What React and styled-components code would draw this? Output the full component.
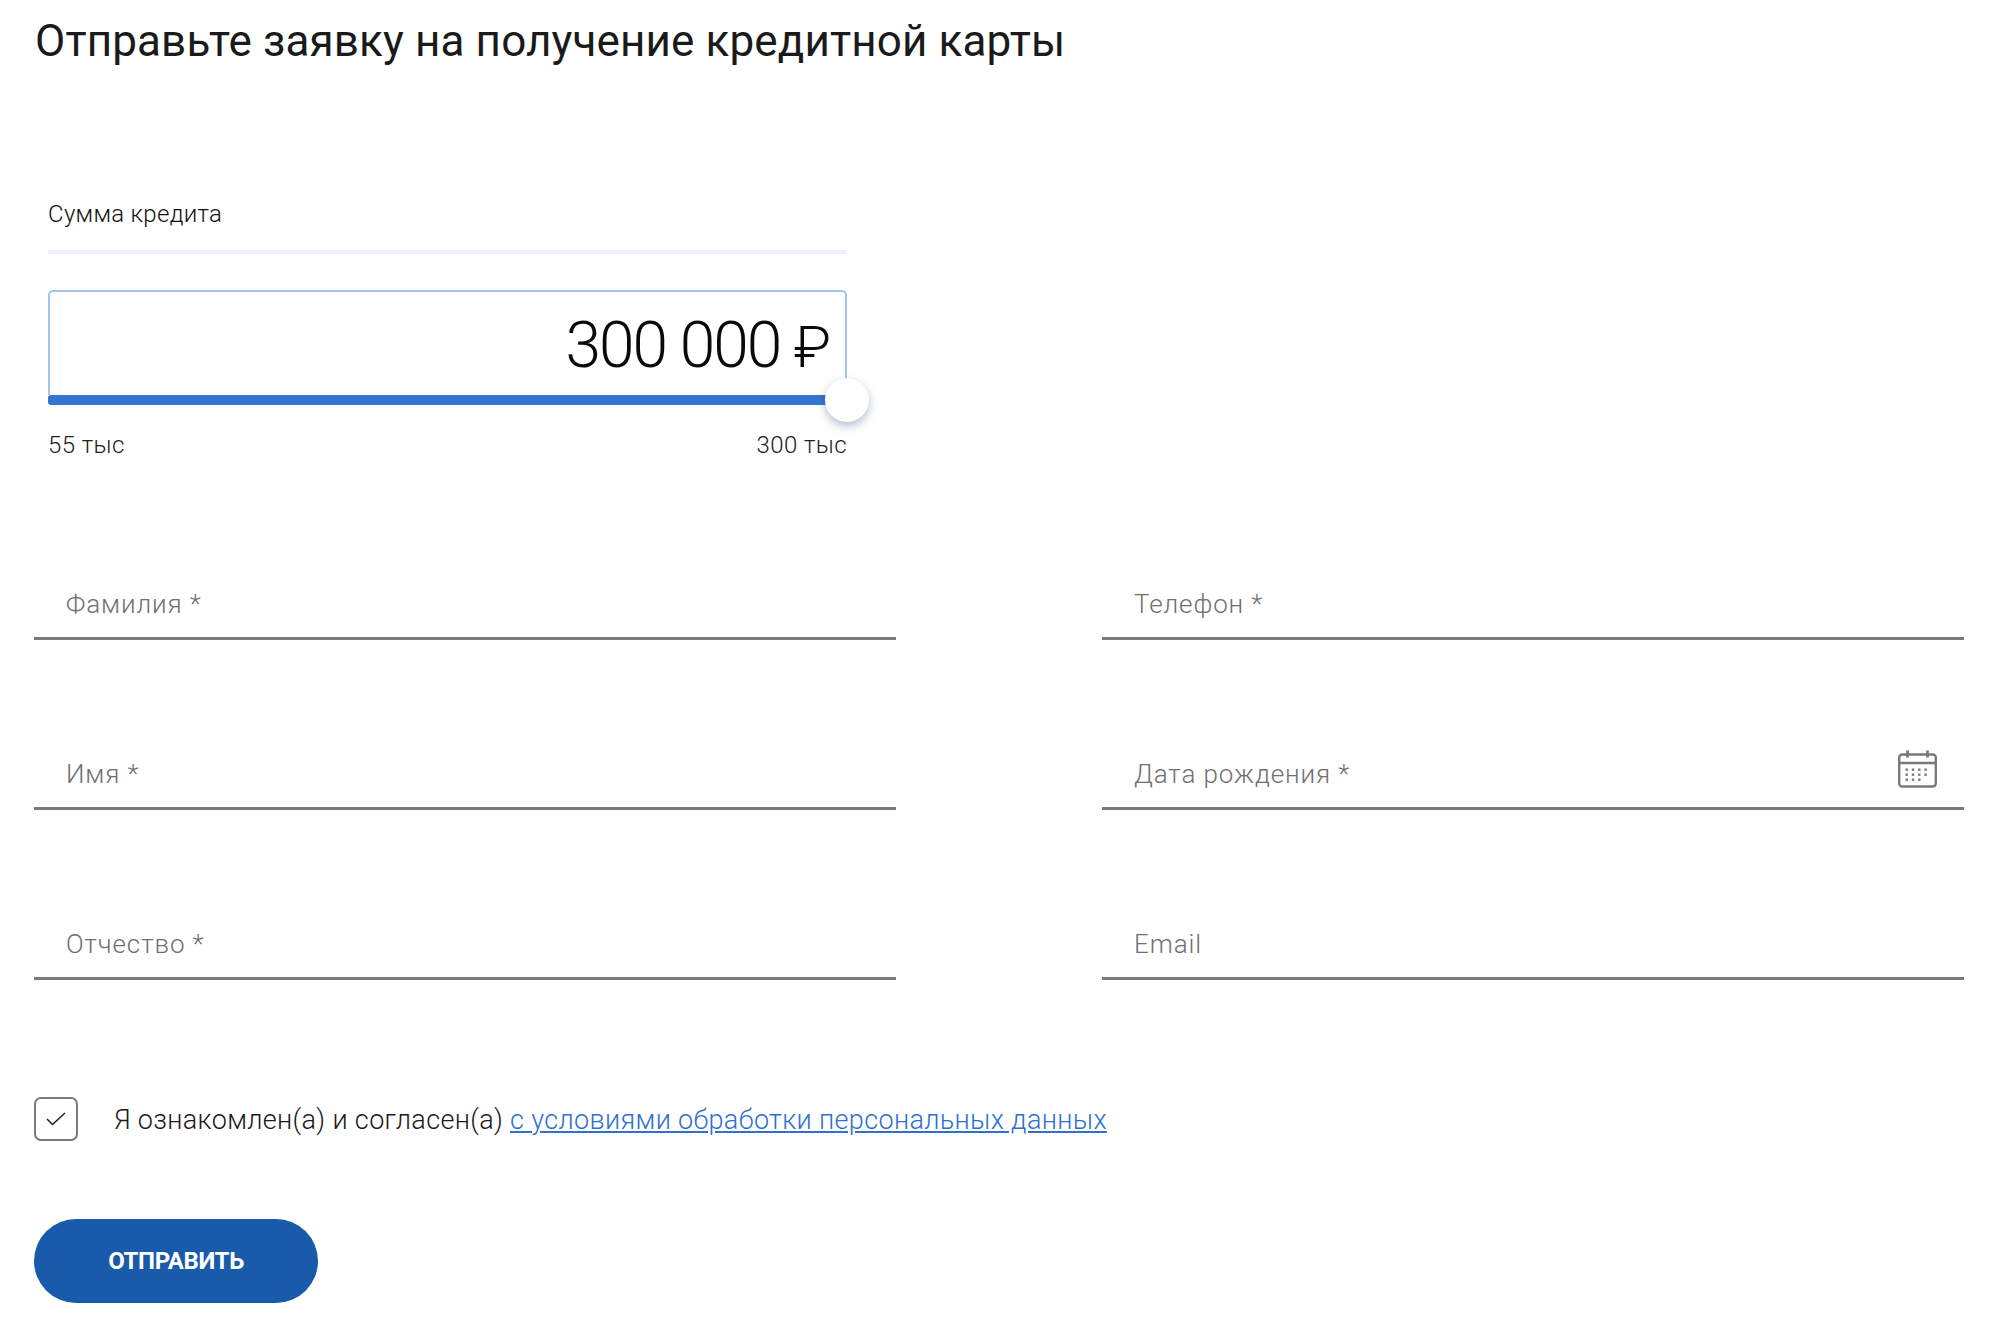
import React from "react";
import styled, { createGlobalStyle } from "styled-components";

const GlobalStyle = createGlobalStyle`
  * { box-sizing: border-box; }
  body {
    margin: 0;
    background: #fff;
    font-family: Roboto, "Liberation Sans", sans-serif;
  }
`;

const leftFields = ["Фамилия *", "Имя *", "Отчество *"];
const rightFields = ["Телефон *", "Дата рождения *", "Email"];

function CalendarIcon() {
  const dots = [];
  [0, 1, 2].forEach((row) =>
    [0, 1, 2, 3].forEach((col) => {
      if (row === 2 && col === 3) return;
      dots.push(<rect key={`${row}-${col}`} x={7.5 + col * 6.3} y={18.5 + row * 5} width="2.4" height="2.4" fill="#7a7a7a" />);
    })
  );
  return (
    <CalendarSvg viewBox="0 0 39 38" fill="none" stroke="#7a7a7a" strokeWidth="2.4">
      <rect x="1.2" y="4.5" width="36.6" height="32" rx="3" />
      <path d="M1 13h37" />
      <path d="M9.5 0.5v7M29.5 0.5v7" strokeWidth="2.8" />
      <g stroke="none">{dots}</g>
    </CalendarSvg>
  );
}

function Field({ label, withIcon }) {
  return (
    <FieldBox>
      <FieldLabel>{label}</FieldLabel>
      {withIcon && <CalendarIcon />}
    </FieldBox>
  );
}

export default function App() {
  return (
    <Page>
      <GlobalStyle />
      <Title>Отправьте заявку на получение кредитной карты</Title>

      <Slider>
        <SliderLabel>Сумма кредита</SliderLabel>
        <AmountBox>
          <Amount>
            300 000 <Ruble>₽</Ruble>
          </Amount>
        </AmountBox>
        <Track>
          <Thumb />
        </Track>
        <Limits>
          <span>55 тыс</span>
          <span>300 тыс</span>
        </Limits>
      </Slider>

      <FieldsGrid>
        <FieldsColumn>
          {leftFields.map((f) => (
            <Field key={f} label={f} />
          ))}
        </FieldsColumn>
        <FieldsColumn>
          {rightFields.map((f) => (
            <Field key={f} label={f} withIcon={f.startsWith("Дата")} />
          ))}
        </FieldsColumn>
      </FieldsGrid>

      <Agree>
        <CheckBox>
          <svg width="20" height="14" viewBox="0 0 20 14" fill="none" stroke="#222" strokeWidth="1.6">
            <path d="M1 7l5.5 5.5L19 1" />
          </svg>
        </CheckBox>
        <AgreeText>
          Я ознакомлен(а) и согласен(а) <AgreeLink href="#">с условиями обработки персональных данных</AgreeLink>
        </AgreeText>
      </Agree>

      <SubmitButton>ОТПРАВИТЬ</SubmitButton>
    </Page>
  );
}

const Page = styled.div`
  width: 1996px;
  height: 1332px;
  padding: 14px 0 0 34px;
  overflow: hidden;
`;

const Title = styled.h1`
  margin: 0 0 0 1px;
  height: 54px;
  font-size: 44px;
  line-height: 54px;
  font-weight: 400;
  color: #1a1a1a;
  letter-spacing: 0.13px;
  white-space: nowrap;
`;

const Slider = styled.div`
  width: 799px;
  margin: 126px 0 0 14px;
`;

const SliderLabel = styled.div`
  height: 60px;
  font-size: 24px;
  line-height: 40px;
  font-weight: 300;
  letter-spacing: 0.3px;
  color: #111;
  border-bottom: 4px solid #edf2fa;
`;

const AmountBox = styled.div`
  height: 105px;
  margin-top: 36px;
  padding: 6px 14px 0 0;
  display: flex;
  align-items: center;
  justify-content: flex-end;
  border: 2px solid #a6c5ee;
  border-bottom: 0;
  border-radius: 5px 5px 0 0;
`;

const Amount = styled.div`
  font-size: 64px;
  line-height: 84px;
  font-weight: 300;
  letter-spacing: -2px;
  color: #0a0a0a;
  white-space: pre;
`;

const Ruble = styled.span`
  font-size: 58px;
  letter-spacing: 0;
`;

const Track = styled.div`
  position: relative;
  height: 10px;
  background: #3475d0;
  border-radius: 3px;
`;

const Thumb = styled.div`
  position: absolute;
  right: -22px;
  top: -17px;
  width: 44px;
  height: 44px;
  border-radius: 50%;
  background: #fff;
  box-shadow: 0 4px 10px rgba(40, 70, 120, 0.35);
`;

const Limits = styled.div`
  display: flex;
  justify-content: space-between;
  margin-top: 24px;
  font-size: 24px;
  line-height: 32px;
  font-weight: 300;
  letter-spacing: 0.4px;
  color: #222;
`;

const FieldsGrid = styled.div`
  display: grid;
  grid-template-columns: 862px 862px;
  column-gap: 206px;
  margin-top: 97px;
`;

const FieldsColumn = styled.div`
  display: flex;
  flex-direction: column;
  gap: 88px;
`;

const FieldBox = styled.div`
  position: relative;
  height: 82px;
  padding: 28px 32px 0;
  border-bottom: 3px solid #7a7a7a;
`;

const FieldLabel = styled.span`
  font-size: 26px;
  line-height: 36px;
  font-weight: 300;
  letter-spacing: 0.9px;
  color: #707070;
`;

const CalendarSvg = styled.svg`
  position: absolute;
  right: 27px;
  top: 22px;
  width: 39px;
  height: 38px;
`;

const Agree = styled.div`
  display: flex;
  align-items: center;
  gap: 36px;
  margin-top: 117px;
`;

const CheckBox = styled.div`
  width: 44px;
  height: 44px;
  display: flex;
  align-items: center;
  justify-content: center;
  border: 2px solid #7a7a7a;
  border-radius: 7px;
`;

const AgreeText = styled.div`
  padding-top: 2px;
  font-size: 27px;
  line-height: 36px;
  font-weight: 300;
  letter-spacing: 0.34px;
  color: #1a1a1a;
`;

const AgreeLink = styled.a`
  color: #2f6fd0;
`;

const SubmitButton = styled.button`
  display: block;
  width: 284px;
  height: 84px;
  margin-top: 78px;
  border: 0;
  border-radius: 42px;
  background: #1a5aaa;
  color: #fff;
  font-family: Roboto, "Liberation Sans", sans-serif;
  font-size: 24px;
  font-weight: 700;
  letter-spacing: -0.4px;
`;
